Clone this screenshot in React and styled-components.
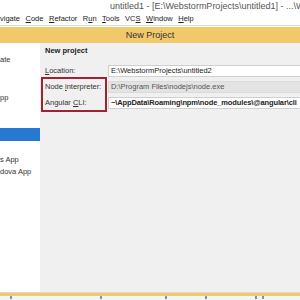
import React from "react";
import styled, { createGlobalStyle } from "styled-components";

const Global = createGlobalStyle`
  html, body { margin: 0; padding: 0; background: #fff; }
  body { width: 300px; height: 300px; overflow: hidden; font-family: "Liberation Sans", Arial, sans-serif; }
  #root { width: 300px; height: 300px; }
`;

const Frame = styled.div`
  width: 300px;
  height: 300px;
  display: flex;
  flex-direction: column;
  overflow: hidden;
  background: #fff;
`;

const TitleBar = styled.div`
  height: 13px;
  flex: none;
  padding-left: 110px;
  font-size: 9px;
  line-height: 13px;
  color: #555;
  white-space: nowrap;
  overflow: hidden;
`;

const MenuBar = styled.div`
  height: 12px;
  flex: none;
  display: flex;
  gap: 5.5px;
  font-size: 7.5px;
  line-height: 12px;
  color: #222;
  white-space: nowrap;
  border-bottom: 1px solid #dcdcdc;
`;

const MenuItem = styled.span`
  u { text-decoration: underline; text-underline-offset: 1px; }
`;

const DialogTitle = styled.div`
  height: 16px;
  flex: none;
  margin-top: 1px;
  background: #f1c96b;
  font-size: 9px;
  line-height: 16px;
  color: #333;
  text-align: center;
`;

const Body = styled.div`
  flex: 1;
  display: flex;
  min-height: 0;
`;

const Sidebar = styled.div`
  width: 40px;
  flex: none;
  background: #fff;
  display: flex;
  flex-direction: column;
  padding-top: 10px;
  overflow: hidden;
`;

const ListItem = styled.div`
  height: ${(p) => p.$h || 13}px;
  flex: none;
  margin-top: ${(p) => p.$gap || 0}px;
  font-size: 7.5px;
  line-height: ${(p) => p.$h || 13}px;
  color: #333;
  white-space: nowrap;
  background: ${(p) => (p.$selected ? "#2678d0" : "transparent")};
`;

const Main = styled.div`
  flex: 1;
  background: #f0f0f0;
  padding: 2px 0 0 5px;
  position: relative;
`;

const Heading = styled.div`
  font-size: 7.5px;
  font-weight: bold;
  line-height: 12px;
  color: #222;
  height: 12px;
`;

const Form = styled.div`
  margin-top: 7px;
  display: grid;
  grid-template-columns: 63px 1fr;
  row-gap: 3px;
  align-items: center;
`;

const Label = styled.div`
  font-size: 7.5px;
  line-height: 13px;
  color: #333;
  white-space: nowrap;
  u { text-decoration: underline; text-underline-offset: 1px; }
`;

const Field = styled.div`
  height: 12px;
  box-sizing: border-box;
  border: 1px solid ${(p) => (p.$disabled ? "#dadada" : "#d0d0d0")};
  border-right: none;
  background: ${(p) => (p.$disabled ? "#e3e3e3" : "#fff")};
  font-size: 7.5px;
  line-height: 10px;
  padding-left: 2px;
  color: ${(p) => (p.$disabled ? "#555" : "#222")};
  font-weight: ${(p) => (p.$bold ? "bold" : "normal")};
  letter-spacing: ${(p) => (p.$bold ? "-0.12px" : "0")};
  white-space: nowrap;
  overflow: hidden;
`;

const Highlight = styled.div`
  position: absolute;
  left: 1px;
  top: 34px;
  width: 66px;
  height: 35px;
  box-sizing: border-box;
  border: 2px solid #9e2330;
`;

const Footer = styled.div`
  height: 7px;
  flex: none;
  border-top: 1px solid #d8d8d8;
  display: flex;
  flex-direction: column;
`;

const YellowLine = styled.div`
  height: 3px;
  background: #f1c96b;
`;

const TickRow = styled.div`
  flex: 1;
  background: #f4f4f4;
  display: flex;
`;

const Tick = styled.span`
  width: 2px;
  height: 3px;
  background: #8a8ab8;
  margin-left: ${(p) => p.$x}px;
`;

export default function App() {
  return (
    <Frame>
      <Global />
      <TitleBar>untitled1 - [E:\WebstormProjects\untitled1] - ...\WebStorm</TitleBar>
      <MenuBar>
        <MenuItem>vigate</MenuItem>
        <MenuItem><u>C</u>ode</MenuItem>
        <MenuItem><u>R</u>efactor</MenuItem>
        <MenuItem>R<u>u</u>n</MenuItem>
        <MenuItem><u>T</u>ools</MenuItem>
        <MenuItem>VC<u>S</u></MenuItem>
        <MenuItem><u>W</u>indow</MenuItem>
        <MenuItem><u>H</u>elp</MenuItem>
      </MenuBar>
      <DialogTitle>New Project</DialogTitle>
      <Body>
        <Sidebar>
          <ListItem>ate</ListItem>
          <ListItem $gap={25}>pp</ListItem>
          <ListItem $gap={24} $selected />
          <ListItem $gap={13} $h={12}>s App</ListItem>
          <ListItem $h={12}>dova App</ListItem>
        </Sidebar>
        <Main>
          <Heading>New project</Heading>
          <Form>
            <Label><u>L</u>ocation:</Label>
            <Field>E:\WebstormProjects\untitled2</Field>
            <Label>Node <u>i</u>nterpreter:</Label>
            <Field $disabled>D:\Program Files\nodejs\node.exe</Field>
            <Label>Angular <u>C</u>LI:</Label>
            <Field $bold>~\AppData\Roaming\npm\node_modules\@angular\cli</Field>
          </Form>
          <Highlight />
        </Main>
      </Body>
      <Footer>
        <YellowLine />
        <TickRow>
          <Tick $x={10} />
          <Tick $x={88} />
          <Tick $x={63} />
          <Tick $x={38} />
          <Tick $x={48} />
          <Tick $x={5} />
        </TickRow>
      </Footer>
    </Frame>
  );
}
